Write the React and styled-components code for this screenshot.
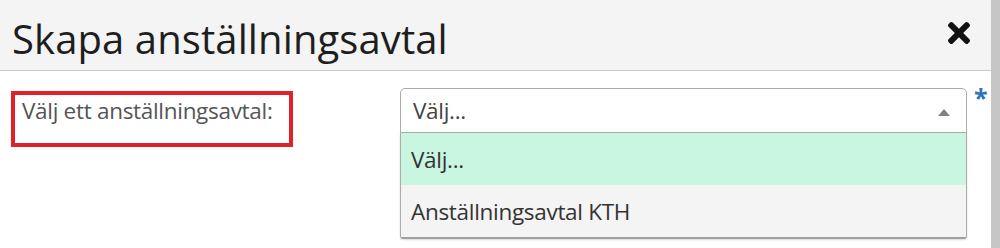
import React from "react";
import styled, { createGlobalStyle } from "styled-components";
import { FaTimes } from "react-icons/fa";

const GlobalStyle = createGlobalStyle`
  html, body {
    margin: 0;
    padding: 0;
    background: #ffffff;
  }
  body {
    font-family: "Open Sans", "Liberation Sans", sans-serif;
  }
`;

const Page = styled.div`
  display: flex;
  width: 1000px;
  height: 248px;
  overflow: hidden;
`;

const Modal = styled.div`
  flex: 1;
  display: flex;
  flex-direction: column;
  background: #ffffff;
`;

const EdgeBar = styled.div`
  width: 9px;
  background: #c6c6c6;
`;

const Header = styled.div`
  height: 71px;
  box-sizing: border-box;
  display: flex;
  align-items: center;
  justify-content: space-between;
  padding: 0 16px 0 12px;
  background: #f4f4f4;
  border-bottom: 1px solid #c9c9c9;
`;

const Title = styled.h1`
  margin: 0;
  padding-top: 6px;
  font-size: 40px;
  font-weight: 400;
  color: #1e1e1e;
  letter-spacing: 0.1px;
`;

const CloseButton = styled.button`
  border: 0;
  background: none;
  padding: 0;
  margin-bottom: 4px;
  display: flex;
  color: #111;
  cursor: pointer;
`;

const Body = styled.div`
  display: flex;
  align-items: flex-start;
  padding: 17px 0 0 11px;
`;

const LabelBox = styled.div`
  width: 282px;
  height: 56px;
  box-sizing: border-box;
  margin-top: 3px;
  padding: 0 0 0 7px;
  border: 4px solid #e0202b;
`;

const Label = styled.label`
  font-size: 22.5px;
  color: #555;
  letter-spacing: -0.3px;
`;

const Field = styled.div`
  margin-left: 107px;
  width: 567px;
  display: flex;
  flex-direction: column;
`;

const SelectBox = styled.div`
  height: 45px;
  box-sizing: border-box;
  display: flex;
  align-items: center;
  justify-content: space-between;
  padding: 0 16px 0 12px;
  border: 1px solid #ababab;
  border-radius: 5px 5px 0 0;
  font-size: 22.5px;
  color: #444;
  letter-spacing: -0.3px;
`;

const Arrow = styled.span`
  width: 0;
  height: 0;
  margin-top: 4px;
  border-left: 6px solid transparent;
  border-right: 6px solid transparent;
  border-bottom: 7px solid #808080;
`;

const OptionList = styled.ul`
  list-style: none;
  margin: 0;
  padding: 0;
  border: 1px solid #ababab;
  border-top: 0;
  border-bottom: 2px solid #9f9f9f;
  border-radius: 0 0 3px 3px;
  box-shadow: 0 1px 2px rgba(0, 0, 0, 0.15);
`;

const Option = styled.li`
  height: 52px;
  box-sizing: border-box;
  display: flex;
  align-items: center;
  padding-left: 10px;
  background: ${props => (props.active ? "#c9f6e1" : "#f4f4f4")};
  font-size: 22.5px;
  color: #333;
  letter-spacing: -0.3px;
`;

const Required = styled.span`
  margin: -3px 0 0 7px;
  font-size: 25px;
  font-weight: 700;
  line-height: 25px;
  color: #2f72bb;
`;

export default function App() {
  return (
    <Page>
      <GlobalStyle />
      <Modal>
        <Header>
          <Title>Skapa anställningsavtal</Title>
          <CloseButton aria-label="Stäng">
            <FaTimes size={32} />
          </CloseButton>
        </Header>
        <Body>
          <LabelBox>
            <Label>Välj ett anställningsavtal:</Label>
          </LabelBox>
          <Field>
            <SelectBox>
              <span>Välj...</span>
              <Arrow />
            </SelectBox>
            <OptionList>
              <Option active>Välj...</Option>
              <Option>Anställningsavtal KTH</Option>
            </OptionList>
          </Field>
          <Required>*</Required>
        </Body>
      </Modal>
      <EdgeBar />
    </Page>
  );
}
